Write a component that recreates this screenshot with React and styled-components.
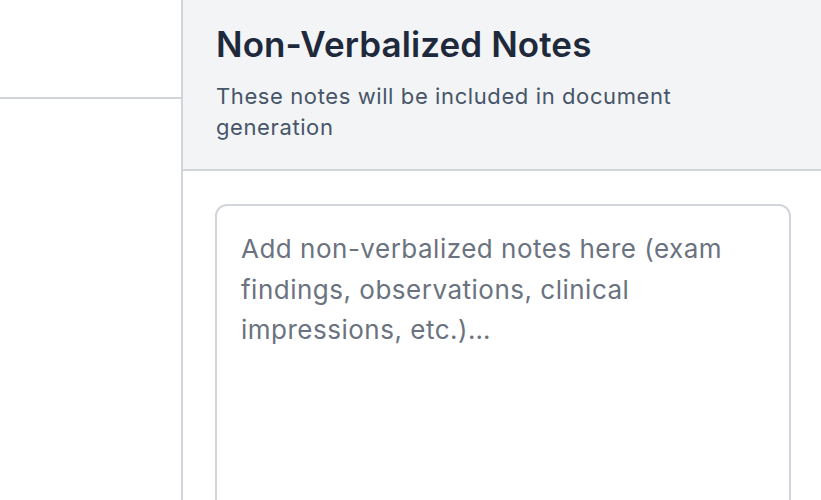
import React from "react";
import styled, { createGlobalStyle } from "styled-components";

const Global = createGlobalStyle`
  html, body { margin: 0; padding: 0; height: 100%; overflow: hidden; }
  body { font-family: Inter, "Noto Sans", sans-serif; background: #ffffff; }
  #root { height: 100%; }
  * { box-sizing: border-box; }
`;

const Layout = styled.div`
  display: flex;
  height: 100vh;
  width: 100vw;
  overflow: hidden;
`;

const Sidebar = styled.aside`
  width: 183px;
  flex-shrink: 0;
  border-right: 2px solid #d1d5db;
  background: #ffffff;
  display: flex;
  flex-direction: column;
`;

const SidebarHeader = styled.div`
  height: 99px;
  flex-shrink: 0;
  border-bottom: 2px solid #d1d5db;
`;

const Panel = styled.section`
  flex: 1;
  display: flex;
  flex-direction: column;
  min-width: 0;
  overflow: hidden;
`;

const PanelHeader = styled.header`
  flex-shrink: 0;
  background: #f3f4f6;
  border-bottom: 2px solid #d1d5db;
  padding: 24px 34px 0 33px;
  height: 171px;
`;

const Title = styled.h2`
  margin: 0;
  font-size: 35px;
  line-height: 40px;
  font-weight: 600;
  color: #1e293b;
  letter-spacing: 0.1px;
`;

const Subtitle = styled.p`
  margin: 17px 0 0;
  font-size: 22px;
  line-height: 31px;
  letter-spacing: 0.6px;
  color: #475569;
  max-width: 500px;
`;

const Body = styled.div`
  flex: 1;
  min-height: 0;
  padding: 33px 30px 0 32px;
`;

const NotesArea = styled.textarea`
  display: block;
  width: 100%;
  height: 400px;
  resize: none;
  border: 2px solid #d1d5db;
  border-radius: 12px;
  padding: 23px 24px;
  font-family: Inter, "Noto Sans", sans-serif;
  font-size: 26px;
  line-height: 40.5px;
  letter-spacing: 0.5px;
  color: #1e293b;
  background: #ffffff;
  outline: none;
  &::placeholder { color: #6b7280; }
`;

export default function App() {
  return (
    <>
      <Global />
      <Layout>
        <Sidebar>
          <SidebarHeader />
        </Sidebar>
        <Panel>
          <PanelHeader>
            <Title>Non-Verbalized Notes</Title>
            <Subtitle>These notes will be included in document generation</Subtitle>
          </PanelHeader>
          <Body>
            <NotesArea placeholder="Add non-verbalized notes here (exam findings, observations, clinical impressions, etc.)…" />
          </Body>
        </Panel>
      </Layout>
    </>
  );
}
